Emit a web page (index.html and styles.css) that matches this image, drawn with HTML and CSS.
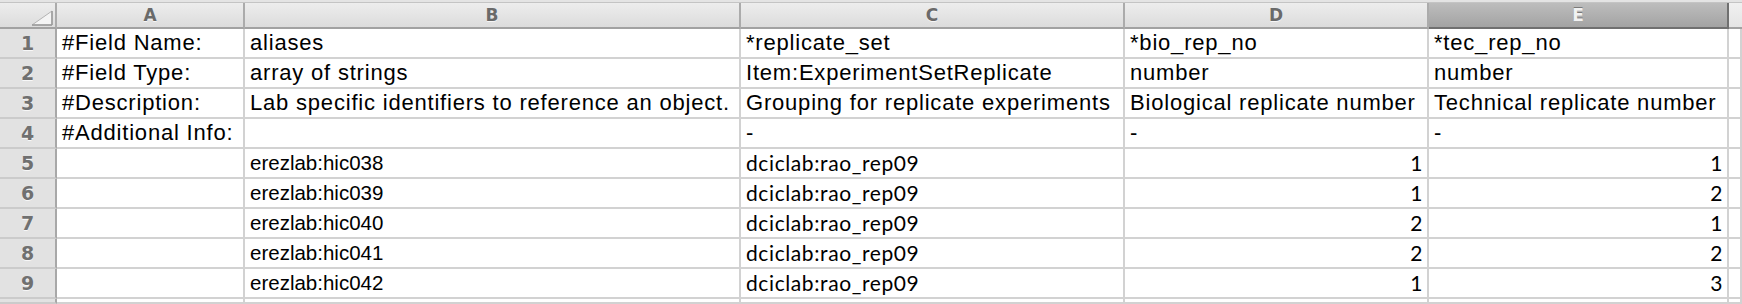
FILE: index.html
```html
<!DOCTYPE html>
<html lang="en">

<head>
  <meta charset="UTF-8">
  <title>Sheet</title>
  <link rel="stylesheet" href="styles.css">
</head>

<body>
  <div class="topstrip"></div>
  <div class="sheet">
    <!-- column headers -->
    <div class="corner">
      <svg width="22" height="16" viewBox="0 0 22 16">
        <polygon points="1,15 21,15 21,1" fill="#f4f4f4" stroke="#b4b4b4" stroke-width="1"/>
        <line x1="21" y1="1" x2="21" y2="15" stroke="#9a9a9a" stroke-width="1.5"/>
        <line x1="1" y1="15" x2="21" y2="15" stroke="#9a9a9a" stroke-width="1.5"/>
      </svg>
    </div>
    <div class="colhead">A</div>
    <div class="colhead">B</div>
    <div class="colhead">C</div>
    <div class="colhead">D</div>
    <div class="colhead sel">E</div>
    <div class="colhead rest"></div>

    <div class="rowhead">1</div>
    <div class="cell">#Field Name:</div>
    <div class="cell">aliases</div>
    <div class="cell">*replicate_set</div>
    <div class="cell">*bio_rep_no</div>
    <div class="cell">*tec_rep_no</div>
    <div class="cell"></div>

    <div class="rowhead">2</div>
    <div class="cell">#Field Type:</div>
    <div class="cell">array of strings</div>
    <div class="cell">Item:ExperimentSetReplicate</div>
    <div class="cell">number</div>
    <div class="cell">number</div>
    <div class="cell"></div>

    <div class="rowhead">3</div>
    <div class="cell">#Description:</div>
    <div class="cell">Lab specific identifiers to reference an object.</div>
    <div class="cell">Grouping for replicate experiments</div>
    <div class="cell">Biological replicate number</div>
    <div class="cell">Technical replicate number</div>
    <div class="cell"></div>

    <div class="rowhead">4</div>
    <div class="cell">#Additional Info:</div>
    <div class="cell"></div>
    <div class="cell">-</div>
    <div class="cell">-</div>
    <div class="cell">-</div>
    <div class="cell"></div>

    <div class="rowhead">5</div>
    <div class="cell"></div>
    <div class="cell alias">erezlab:hic038</div>
    <div class="cell cal">dciclab:rao_rep09</div>
    <div class="cell cal num">1</div>
    <div class="cell cal num">1</div>
    <div class="cell"></div>

    <div class="rowhead">6</div>
    <div class="cell"></div>
    <div class="cell alias">erezlab:hic039</div>
    <div class="cell cal">dciclab:rao_rep09</div>
    <div class="cell cal num">1</div>
    <div class="cell cal num">2</div>
    <div class="cell"></div>

    <div class="rowhead">7</div>
    <div class="cell"></div>
    <div class="cell alias">erezlab:hic040</div>
    <div class="cell cal">dciclab:rao_rep09</div>
    <div class="cell cal num">2</div>
    <div class="cell cal num">1</div>
    <div class="cell"></div>

    <div class="rowhead">8</div>
    <div class="cell"></div>
    <div class="cell alias">erezlab:hic041</div>
    <div class="cell cal">dciclab:rao_rep09</div>
    <div class="cell cal num">2</div>
    <div class="cell cal num">2</div>
    <div class="cell"></div>

    <div class="rowhead">9</div>
    <div class="cell"></div>
    <div class="cell alias">erezlab:hic042</div>
    <div class="cell cal">dciclab:rao_rep09</div>
    <div class="cell cal num">1</div>
    <div class="cell cal num">3</div>
    <div class="cell"></div>

    <div class="rowhead"></div>
    <div class="cell"></div>
    <div class="cell"></div>
    <div class="cell"></div>
    <div class="cell"></div>
    <div class="cell"></div>
    <div class="cell"></div>
  </div>
</body>
</html>
```

FILE: styles.css
```css
body {
  margin: 0;
  padding: 0;
  background-color: #fff;
  overflow: hidden;
  font-family: "Liberation Sans", Arial, sans-serif;
}

.topstrip {
  height: 2px;
  background-color: #e4e4e4;
  border-bottom: 1px solid #c4c4c4;
}

.sheet {
  display: grid;
  grid-template-columns: 57px 188px 496px 384px 304px 300px 13px;
  grid-template-rows: 26px repeat(9, 30px) 5px;
}

.corner,
.colhead {
  box-sizing: border-box;
  background: linear-gradient(#ededed, #dcdcdc);
  border-right: 2px solid #ababab;
  border-bottom: 2px solid #a2a2a2;
}

.corner {
  display: flex;
  justify-content: flex-end;
  align-items: flex-end;
  padding: 0 2px 1px 0;
}

.colhead {
  font-family: "DejaVu Sans", sans-serif;
  font-weight: bold;
  font-size: 17px;
  line-height: 24px;
  color: #6a6a6a;
  text-align: center;
  text-shadow: 0 1px 0 #f6f6f6;
}

.colhead.sel {
  background: linear-gradient(#bdbdbd, #a3a3a3);
  border-right-color: #707070;
  border-bottom-color: #707070;
  color: #f2f2f2;
  text-shadow: 0 -1px 0 #7a7a7a;
}

.colhead.rest {
  border-right: none;
  background: linear-gradient(#f0f0f0, #e4e4e4);
}

.rowhead {
  box-sizing: border-box;
  background-color: #e2e2e2;
  border-right: 2px solid #a8a8a8;
  border-bottom: 2px solid #cbcbcb;
  font-family: "DejaVu Sans", sans-serif;
  font-weight: bold;
  font-size: 19px;
  line-height: 29px;
  color: #707070;
  text-align: center;
  text-shadow: 0 1px 0 #f8f8f8;
}

.cell {
  box-sizing: border-box;
  border-right: 2px solid #d2d2d2;
  border-bottom: 2px solid #d2d2d2;
  padding: 0 4px 0 5px;
  font-size: 22px;
  letter-spacing: 0.8px;
  line-height: 28px;
  color: #000;
  white-space: nowrap;
  overflow: hidden;
}

.cell.alias {
  font-size: 20.5px;
  letter-spacing: 0;
}

.cell.cal {
  font-family: Lato, "Open Sans", sans-serif;
  font-size: 21px;
  letter-spacing: 0.6px;
}

.cell.num {
  text-align: right;
}
```
